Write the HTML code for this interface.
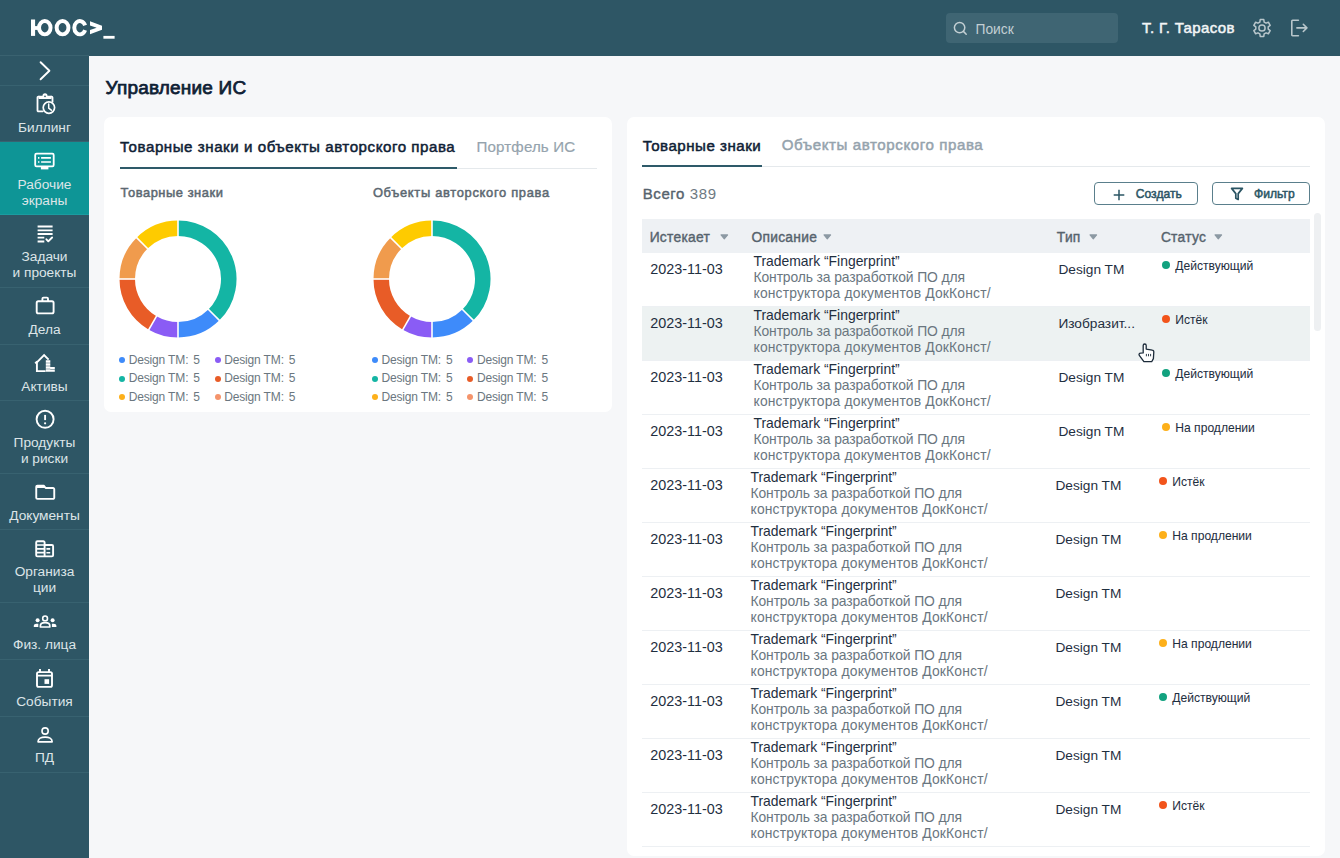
<!DOCTYPE html>
<html lang="ru">
<head>
<meta charset="utf-8">
<title>Управление ИС</title>
<style>
*{box-sizing:border-box;margin:0;padding:0}
html,body{width:1340px;height:858px;overflow:hidden;background:#F6F7F9;font-family:"Liberation Sans",sans-serif}
body{position:relative}
.a{position:absolute;white-space:nowrap}
#hdr{position:absolute;left:0;top:0;width:1340px;height:56px;background:#2E5665}
#side{position:absolute;left:0;top:56px;width:89px;height:802px;background:#2E5665}
#sline{position:absolute;left:0;top:55px;width:89px;height:1px;background:#3A6270}
.si{position:absolute;left:0;width:89px;border-bottom:1px solid #386270}
.si.act{background:#0E9596;border-bottom-color:#1A9CA0}
.si svg{position:absolute;left:32.5px;width:24px;height:24px}
.si .t{position:absolute;left:0;width:89px;text-align:center;color:#DDE5E8;font-size:13.7px;line-height:16px;white-space:nowrap}
.card{position:absolute;background:#fff;border-radius:7px}
.dot{position:absolute;width:6px;height:6px;border-radius:50%}
.leg{font-size:11.8px;line-height:20px;color:#6B7780}
.row{position:absolute;left:642px;width:668px;height:54px;border-bottom:1px solid #EDF0F3}
.row.hov{background:#EDF2F2}
.td{font-size:14px;line-height:16px;color:#1F2F3F}
.desc{font-size:13.9px;line-height:16px;color:#6E7A83}
.desc .tm{color:#1F2F3F}
.sdot{position:absolute;width:8px;height:8px;border-radius:50%}
.st{font-size:12.1px;line-height:14px;color:#1F2F3F;-webkit-text-stroke:0.15px #1F2F3F}
.th{font-size:14.4px;line-height:20px;color:#56636D;-webkit-text-stroke:0.4px #56636D}
.th svg{margin-left:7px;vertical-align:2px}
.btn{position:absolute;top:182px;height:23px;border:1px solid #5A7F8C;border-radius:4px}
.bt{font-size:12px;line-height:20px;color:#2B5564;-webkit-text-stroke:0.4px #2B5564}
</style>
</head>
<body>
<div id="hdr">
  <div class="a" style="left:946px;top:13px;width:172px;height:30px;border-radius:4px;background:#3F6573"></div>
  <svg class="a" style="left:952px;top:20px" width="16" height="16" viewBox="0 0 16 16"><circle cx="7.6" cy="7.6" r="5.2" fill="none" stroke="#C3CFD3" stroke-width="1.5"/><path d="M11.4 11.4L14.2 14.2" stroke="#C3CFD3" stroke-width="1.5" stroke-linecap="round"/></svg>
  <svg class="a" style="left:1252px;top:18px" width="20" height="20" viewBox="-10 -10 20 20"><path d="M-2.15 -5.92 L-1.79 -8.41 L1.79 -8.41 L2.15 -5.92 L4.05 -4.83 L6.39 -5.75 L8.18 -2.66 L6.20 -1.09 L6.20 1.09 L8.18 2.66 L6.39 5.75 L4.05 4.83 L2.15 5.92 L1.79 8.41 L-1.79 8.41 L-2.15 5.92 L-4.05 4.83 L-6.39 5.75 L-8.18 2.66 L-6.20 1.09 L-6.20 -1.09 L-8.18 -2.66 L-6.39 -5.75 L-4.05 -4.83Z" fill="none" stroke="#B8C6CB" stroke-width="1.5" stroke-linejoin="round"/><circle cx="0" cy="0" r="3.1" fill="none" stroke="#B8C6CB" stroke-width="1.5"/></svg>
  <svg class="a" style="left:1288px;top:17px" width="22" height="22" viewBox="0 0 22 22"><path d="M10.4 3.3H4.6a0.8 0.8 0 0 0-0.8 0.8v13.8a0.8 0.8 0 0 0 0.8 0.8h5.8" fill="none" stroke="#B8C6CB" stroke-width="1.6" stroke-linecap="round"/><path d="M8.9 10.9h9.8M15.3 7.3l3.6 3.6l-3.6 3.6" fill="none" stroke="#B8C6CB" stroke-width="1.6" stroke-linecap="round" stroke-linejoin="round"/></svg>
</div>
<div id="sline"></div>
<div id="side">
<div class="si" style="top:0;height:30px"><svg style="position:absolute;left:0;top:0;width:89px;height:30px" viewBox="0 0 89 30"><path d="M40.6 6.2L49.4 14.75L40.6 23.3" fill="none" stroke="#fff" stroke-width="1.9" stroke-linecap="round" stroke-linejoin="round"/></svg></div>
<div class="si" style="top:30px;height:56px"><svg style="top:6.30px" viewBox="0 0 24 24"><path d="M9.8 19.3H5.4a0.9 0.9 0 0 1-0.9-0.9V5.5a0.9 0.9 0 0 1 0.9-0.9h0.6M18 4.6h0.6a0.9 0.9 0 0 1 0.9 0.9v4.3" fill="none" stroke="#FFFFFF" stroke-width="1.8" stroke-linecap="round"/><path d="M5.6 3.7h3.9a2.5 2.5 0 0 1 5 0h4v3.4H5.6z" fill="#FFFFFF"/><circle cx="12" cy="4.3" r="0.85" fill="#2E5665"/><circle cx="15.9" cy="15.6" r="5.7" fill="none" stroke="#FFFFFF" stroke-width="1.7"/><path d="M15.7 12.1v4.1l2.6 2" fill="none" stroke="#FFFFFF" stroke-width="1.5" stroke-linecap="round" stroke-linejoin="round"/></svg><div class="t" style="top:34.00px">Биллинг</div></div>
<div class="si act" style="top:86px;height:73px"><svg style="top:6.80px" viewBox="0 0 24 24"><g transform="translate(-0.6,0)"><rect x="2.8" y="4.7" width="18.5" height="12.6" rx="1.3" fill="none" stroke="#FFFFFF" stroke-width="1.8"/><rect x="8.5" y="18" width="7.5" height="2.4" fill="#FFFFFF"/><path d="M5.6 8.9h1.4M8.7 8.9h9.8M5.6 13h1.4M8.7 13h9.8" stroke="#FFFFFF" stroke-width="1.6"/></g></svg><div class="t" style="top:34.50px">Рабочие</div><div class="t" style="top:50.50px">экраны</div></div>
<div class="si" style="top:159px;height:73px"><svg style="top:6.55px" viewBox="0 0 24 24"><path d="M4.6 4.45h15M4.6 8.35h15M4.6 12.05h15M4.6 15.65h6.7M4.6 19.45h6.7" stroke="#FFFFFF" stroke-width="1.9"/><path d="M13.4 17.3l1.9 2l3.8-3.8" fill="none" stroke="#FFFFFF" stroke-width="1.9" stroke-linecap="round" stroke-linejoin="round"/></svg><div class="t" style="top:34.25px">Задачи</div><div class="t" style="top:50.25px">и проекты</div></div>
<div class="si" style="top:232px;height:57px"><svg style="top:6.30px" viewBox="0 0 24 24"><rect x="3.7" y="7.2" width="16.9" height="12.2" rx="1.6" fill="none" stroke="#FFFFFF" stroke-width="1.9"/><path d="M9.4 7.2V4.7a1.1 1.1 0 0 1 1.1-1.1h3.4a1.1 1.1 0 0 1 1.1 1.1v2.5" fill="none" stroke="#FFFFFF" stroke-width="1.9"/></svg><div class="t" style="top:34.00px">Дела</div></div>
<div class="si" style="top:289px;height:56px"><svg style="top:5.80px" viewBox="0 0 24 24"><path d="M12.6 20.1H3.9V11.3L11.1 4.1l4.5 4.5" fill="none" stroke="#FFFFFF" stroke-width="1.9" stroke-linejoin="miter"/><path d="M2.2 12.3l1.9-1.9" stroke="#FFFFFF" stroke-width="1.9"/><path d="M12.8 9.2h4.5v2.5h-4.5zM12.8 12.3h4.5v2.4h-4.5zM12.8 15.3h4.5v2.4h-4.5zM12.8 18.3h4.5v2.5h-4.5zM17.3 15.9h4.5v2.2h-4.5zM17.3 18.6h4.5v2.2h-4.5z" fill="#FFFFFF"/></svg><div class="t" style="top:33.50px">Активы</div></div>
<div class="si" style="top:345px;height:73px"><svg style="top:6.30px" viewBox="0 0 24 24"><circle cx="12.1" cy="12.3" r="8.5" fill="none" stroke="#FFFFFF" stroke-width="1.9"/><path d="M12.1 7.9v5.2" stroke="#FFFFFF" stroke-width="1.9"/><circle cx="12.1" cy="16.3" r="1.1" fill="#FFFFFF"/></svg><div class="t" style="top:34.00px">Продукты</div><div class="t" style="top:50.00px">и риски</div></div>
<div class="si" style="top:418px;height:56px"><svg style="top:6.05px" viewBox="0 0 24 24"><g transform="translate(-0.4,0)"><path d="M3.65 6.8a1.2 1.2 0 0 1 1.2-1.2h6.3l1.9 2.4h7.4a1.2 1.2 0 0 1 1.2 1.2v8.5a1.2 1.2 0 0 1-1.2 1.2H4.85a1.2 1.2 0 0 1-1.2-1.2z" fill="none" stroke="#FFFFFF" stroke-width="1.9" stroke-linejoin="round"/><path d="M3.65 5.6h7.5l1.9 2.4H3.65z" fill="#FFFFFF"/></g></svg><div class="t" style="top:33.75px">Документы</div></div>
<div class="si" style="top:474px;height:73px"><svg style="top:6.55px" viewBox="0 0 24 24"><g transform="translate(-0.5,-0.6)"><path d="M12.1 20H4.9a1.2 1.2 0 0 1-1.2-1.2V6.1a1.2 1.2 0 0 1 1.2-1.2h6a1.2 1.2 0 0 1 1.2 1.2V20h7.3a1.2 1.2 0 0 0 1.2-1.2V9.8a1.2 1.2 0 0 0-1.2-1.2h-7.3" fill="none" stroke="#FFFFFF" stroke-width="1.9"/><path d="M3.7 8.6h8.4M3.7 12.5h8.4M3.7 16.3h8.4M13.9 12.45h3.8M13.9 16.35h3.8" stroke="#FFFFFF" stroke-width="1.7"/></g></svg><div class="t" style="top:34.25px">Организа</div><div class="t" style="top:50.25px">ции</div></div>
<div class="si" style="top:547px;height:57px"><svg style="top:6.30px" viewBox="0 0 24 24"><circle cx="12.1" cy="9.4" r="2.4" fill="none" stroke="#FFFFFF" stroke-width="1.6"/><path d="M7.4 18v-1.2c0-1.8 2.1-3.1 4.7-3.1s4.7 1.3 4.7 3.1V18z" fill="none" stroke="#FFFFFF" stroke-width="1.7" stroke-linejoin="round"/><circle cx="4.6" cy="11.3" r="2" fill="#FFFFFF"/><circle cx="19.6" cy="11.3" r="2" fill="#FFFFFF"/><path d="M0.8 18v-1.3c0-1.2 1.2-2 2.6-2h1.9v3.3zM23.4 18v-1.3c0-1.2-1.2-2-2.6-2h-1.9v3.3z" fill="#FFFFFF"/></svg><div class="t" style="top:34.00px">Физ. лица</div></div>
<div class="si" style="top:604px;height:57px"><svg style="top:5.80px" viewBox="0 0 24 24"><g transform="translate(-0.6,-0.2)"><rect x="4.6" y="6.3" width="15" height="14.8" rx="1.6" fill="none" stroke="#FFFFFF" stroke-width="1.9"/><path d="M4.6 9.8h15M7.6 3.3v3M16.6 3.3v3" stroke="#FFFFFF" stroke-width="1.9"/><rect x="12.1" y="13.4" width="4.6" height="4.7" fill="#FFFFFF"/></g></svg><div class="t" style="top:33.50px">События</div></div>
<div class="si" style="top:661px;height:56px"><svg style="top:5.30px" viewBox="0 0 24 24"><circle cx="12.1" cy="9" r="3.1" fill="none" stroke="#FFFFFF" stroke-width="1.6"/><path d="M5.1 19.8v-0.4c0-2.6 3.1-4.3 7-4.3s7 1.7 7 4.3v0.4z" fill="none" stroke="#FFFFFF" stroke-width="1.7" stroke-linejoin="round"/></svg><div class="t" style="top:33.00px">ПД</div></div>
</div>

<div class="card" style="left:104px;top:117px;width:508px;height:295px"></div>
<div class="a" style="left:457px;top:167.5px;width:140px;height:1.5px;background:#E5E9EC"></div>
<div class="a" style="left:120px;top:167px;width:337px;height:2px;background:#2E5A69"></div>
<div class="a" style="left:118.3px;top:218.5px"><svg width="120" height="120" viewBox="0 0 120 120"><path d="M60.00 1.50A58.5 58.5 0 0 1 101.37 101.37L90.41 90.41A43 43 0 0 0 60.00 17.00Z" fill="#14B5A4"/><path d="M101.37 101.37A58.5 58.5 0 0 1 60.00 118.50L60.00 103.00A43 43 0 0 0 90.41 90.41Z" fill="#3E8BFA"/><path d="M60.00 118.50A58.5 58.5 0 0 1 30.75 110.66L38.50 97.24A43 43 0 0 0 60.00 103.00Z" fill="#8A5CF5"/><path d="M30.75 110.66A58.5 58.5 0 0 1 1.50 60.00L17.00 60.00A43 43 0 0 0 38.50 97.24Z" fill="#E85C27"/><path d="M1.50 60.00A58.5 58.5 0 0 1 18.63 18.63L29.59 29.59A43 43 0 0 0 17.00 60.00Z" fill="#F09B4D"/><path d="M18.63 18.63A58.5 58.5 0 0 1 60.00 1.50L60.00 17.00A43 43 0 0 0 29.59 29.59Z" fill="#FECB00"/><line x1="60.00" y1="20.00" x2="60.00" y2="-1.00" stroke="#fff" stroke-width="1.6"/><line x1="88.28" y1="88.28" x2="103.13" y2="103.13" stroke="#fff" stroke-width="1.6"/><line x1="60.00" y1="100.00" x2="60.00" y2="121.00" stroke="#fff" stroke-width="1.6"/><line x1="40.00" y1="94.64" x2="29.50" y2="112.83" stroke="#fff" stroke-width="1.6"/><line x1="20.00" y1="60.00" x2="-1.00" y2="60.00" stroke="#fff" stroke-width="1.6"/><line x1="31.72" y1="31.72" x2="16.87" y2="16.87" stroke="#fff" stroke-width="1.6"/></svg></div>
<div class="a" style="left:371.5px;top:218.5px"><svg width="120" height="120" viewBox="0 0 120 120"><path d="M60.00 1.50A58.5 58.5 0 0 1 101.37 101.37L90.41 90.41A43 43 0 0 0 60.00 17.00Z" fill="#14B5A4"/><path d="M101.37 101.37A58.5 58.5 0 0 1 60.00 118.50L60.00 103.00A43 43 0 0 0 90.41 90.41Z" fill="#3E8BFA"/><path d="M60.00 118.50A58.5 58.5 0 0 1 30.75 110.66L38.50 97.24A43 43 0 0 0 60.00 103.00Z" fill="#8A5CF5"/><path d="M30.75 110.66A58.5 58.5 0 0 1 1.50 60.00L17.00 60.00A43 43 0 0 0 38.50 97.24Z" fill="#E85C27"/><path d="M1.50 60.00A58.5 58.5 0 0 1 18.63 18.63L29.59 29.59A43 43 0 0 0 17.00 60.00Z" fill="#F09B4D"/><path d="M18.63 18.63A58.5 58.5 0 0 1 60.00 1.50L60.00 17.00A43 43 0 0 0 29.59 29.59Z" fill="#FECB00"/><line x1="60.00" y1="20.00" x2="60.00" y2="-1.00" stroke="#fff" stroke-width="1.6"/><line x1="88.28" y1="88.28" x2="103.13" y2="103.13" stroke="#fff" stroke-width="1.6"/><line x1="60.00" y1="100.00" x2="60.00" y2="121.00" stroke="#fff" stroke-width="1.6"/><line x1="40.00" y1="94.64" x2="29.50" y2="112.83" stroke="#fff" stroke-width="1.6"/><line x1="20.00" y1="60.00" x2="-1.00" y2="60.00" stroke="#fff" stroke-width="1.6"/><line x1="31.72" y1="31.72" x2="16.87" y2="16.87" stroke="#fff" stroke-width="1.6"/></svg></div>
<div class="dot" style="left:119.0px;top:357.0px;background:#3E8BFA"></div><div class="a" style="left:128.7px;top:350px;font-size:12px;line-height:20px;color:#6B7780;letter-spacing:-0.15px;">Design TM:&nbsp;<span style="margin-left:1.8px">5</span></div><div class="dot" style="left:214.5px;top:357.0px;background:#8A5CF5"></div><div class="a" style="left:224.2px;top:350px;font-size:12px;line-height:20px;color:#6B7780;letter-spacing:-0.15px;">Design TM:&nbsp;<span style="margin-left:1.8px">5</span></div><div class="dot" style="left:119.0px;top:375.6px;background:#14B5A4"></div><div class="a" style="left:128.7px;top:368px;font-size:12px;line-height:20px;color:#6B7780;letter-spacing:-0.15px;">Design TM:&nbsp;<span style="margin-left:1.8px">5</span></div><div class="dot" style="left:214.5px;top:375.6px;background:#E85C27"></div><div class="a" style="left:224.2px;top:368px;font-size:12px;line-height:20px;color:#6B7780;letter-spacing:-0.15px;">Design TM:&nbsp;<span style="margin-left:1.8px">5</span></div><div class="dot" style="left:119.0px;top:394.3px;background:#FDB01A"></div><div class="a" style="left:128.7px;top:387px;font-size:12px;line-height:20px;color:#6B7780;letter-spacing:-0.15px;">Design TM:&nbsp;<span style="margin-left:1.8px">5</span></div><div class="dot" style="left:214.5px;top:394.3px;background:#F5946B"></div><div class="a" style="left:224.2px;top:387px;font-size:12px;line-height:20px;color:#6B7780;letter-spacing:-0.15px;">Design TM:&nbsp;<span style="margin-left:1.8px">5</span></div>
<div class="dot" style="left:371.7px;top:357.0px;background:#3E8BFA"></div><div class="a" style="left:381.4px;top:350px;font-size:12px;line-height:20px;color:#6B7780;letter-spacing:-0.15px;">Design TM:&nbsp;<span style="margin-left:1.8px">5</span></div><div class="dot" style="left:467.2px;top:357.0px;background:#8A5CF5"></div><div class="a" style="left:476.9px;top:350px;font-size:12px;line-height:20px;color:#6B7780;letter-spacing:-0.15px;">Design TM:&nbsp;<span style="margin-left:1.8px">5</span></div><div class="dot" style="left:371.7px;top:375.6px;background:#14B5A4"></div><div class="a" style="left:381.4px;top:368px;font-size:12px;line-height:20px;color:#6B7780;letter-spacing:-0.15px;">Design TM:&nbsp;<span style="margin-left:1.8px">5</span></div><div class="dot" style="left:467.2px;top:375.6px;background:#E85C27"></div><div class="a" style="left:476.9px;top:368px;font-size:12px;line-height:20px;color:#6B7780;letter-spacing:-0.15px;">Design TM:&nbsp;<span style="margin-left:1.8px">5</span></div><div class="dot" style="left:371.7px;top:394.3px;background:#FDB01A"></div><div class="a" style="left:381.4px;top:387px;font-size:12px;line-height:20px;color:#6B7780;letter-spacing:-0.15px;">Design TM:&nbsp;<span style="margin-left:1.8px">5</span></div><div class="dot" style="left:467.2px;top:394.3px;background:#F5946B"></div><div class="a" style="left:476.9px;top:387px;font-size:12px;line-height:20px;color:#6B7780;letter-spacing:-0.15px;">Design TM:&nbsp;<span style="margin-left:1.8px">5</span></div>

<div class="card" style="left:627px;top:117px;width:698px;height:739px"></div>
<div class="a" style="left:762px;top:165.5px;width:548px;height:1.5px;background:#E5E9EC"></div>
<div class="a" style="left:642px;top:165px;width:120px;height:2px;background:#2E5A69"></div>

<div class="btn" style="left:1094px;width:104px"><svg class="a" style="left:18px;top:6px" width="12" height="12" viewBox="0 0 12 12"><path d="M6 0.7v10.6M0.7 6h10.6" stroke="#2B5564" stroke-width="1.5"/></svg></div>
<div class="btn" style="left:1212px;width:98px"><svg class="a" style="left:17px;top:4px" width="14" height="14" viewBox="0 0 14 14"><path d="M1.6 1.4h10.8L8.2 6.6V12.4L5.8 11.2V6.6z" fill="none" stroke="#2B5564" stroke-width="1.7" stroke-linejoin="round"/></svg></div>
<div class="a" style="left:1135.8px;top:184px;font-size:12.1px;line-height:20px;color:#2B5564;-webkit-text-stroke:0.5px #2B5564;">Создать</div>
<div class="a" style="left:1254px;top:184px;font-size:12.1px;line-height:20px;color:#2B5564;-webkit-text-stroke:0.5px #2B5564;">Фильтр</div>

<div class="a" style="left:642px;top:219px;width:668px;height:34px;background:#EEF1F4"></div>
<div class="a" style="left:1314px;top:213px;width:7px;height:118px;border-radius:4px;background:#EEF0F2"></div>
<div class="a" style="left:649.7px;top:228px;font-size:13.8px;line-height:20px;color:#56636D;-webkit-text-stroke:0.4px #56636D;letter-spacing:0.26px;">Истекает</div>
<svg class="a" style="left:720px;top:233.6px" width="9" height="6" viewBox="0 0 9 6"><path d="M1 0.9h6.6L4.3 4.9z" fill="#8C99A3" stroke="#8C99A3" stroke-width="1.1" stroke-linejoin="round"/></svg>
<div class="a" style="left:751.5px;top:228px;font-size:13.8px;line-height:20px;color:#56636D;-webkit-text-stroke:0.4px #56636D;letter-spacing:0.26px;">Описание</div>
<svg class="a" style="left:822.5px;top:233.6px" width="9" height="6" viewBox="0 0 9 6"><path d="M1 0.9h6.6L4.3 4.9z" fill="#8C99A3" stroke="#8C99A3" stroke-width="1.1" stroke-linejoin="round"/></svg>
<div class="a" style="left:1056.8px;top:228px;font-size:13.8px;line-height:20px;color:#56636D;-webkit-text-stroke:0.4px #56636D;letter-spacing:0.26px;">Тип</div>
<svg class="a" style="left:1088.5px;top:233.6px" width="9" height="6" viewBox="0 0 9 6"><path d="M1 0.9h6.6L4.3 4.9z" fill="#8C99A3" stroke="#8C99A3" stroke-width="1.1" stroke-linejoin="round"/></svg>
<div class="a" style="left:1160.9px;top:228px;font-size:13.8px;line-height:20px;color:#56636D;-webkit-text-stroke:0.4px #56636D;letter-spacing:0.26px;">Статус</div>
<svg class="a" style="left:1214.1px;top:233.6px" width="9" height="6" viewBox="0 0 9 6"><path d="M1 0.9h6.6L4.3 4.9z" fill="#8C99A3" stroke="#8C99A3" stroke-width="1.1" stroke-linejoin="round"/></svg>

<div class="row" style="top:253px"></div><div class="a" style="left:650.2px;top:259px;font-size:14.4px;line-height:20px;color:#1F2F3F;">2023-11-03</div><div class="a" style="left:753.5px;top:251px;font-size:13.9px;line-height:20px;color:#1F2F3F;">Trademark “Fingerprint”</div><div class="a" style="left:753.5px;top:267px;font-size:13.9px;line-height:20px;color:#6A767F;letter-spacing:-0.12px;">Контроль за разработкой ПО для</div><div class="a" style="left:753.5px;top:283px;font-size:13.9px;line-height:20px;color:#6A767F;letter-spacing:0.16px;">конструктора документов ДокКонст/</div><div class="a" style="left:1058.4px;top:260px;font-size:13.7px;line-height:20px;color:#1F2F3F;">Design TM</div><div class="sdot" style="left:1162px;top:261.2px;background:#12A27F"></div><div class="a" style="left:1175.3px;top:256px;font-size:12.1px;line-height:20px;color:#1F2F3F;-webkit-text-stroke:0.05px #1F2F3F;">Действующий</div>
<div class="row hov" style="top:307px"></div><div class="a" style="left:650.2px;top:313px;font-size:14.4px;line-height:20px;color:#1F2F3F;">2023-11-03</div><div class="a" style="left:753.5px;top:305px;font-size:13.9px;line-height:20px;color:#1F2F3F;">Trademark “Fingerprint”</div><div class="a" style="left:753.5px;top:321px;font-size:13.9px;line-height:20px;color:#6A767F;letter-spacing:-0.12px;">Контроль за разработкой ПО для</div><div class="a" style="left:753.5px;top:337px;font-size:13.9px;line-height:20px;color:#6A767F;letter-spacing:0.16px;">конструктора документов ДокКонст/</div><div class="a" style="left:1058.4px;top:314px;font-size:13.7px;line-height:20px;color:#1F2F3F;">Изобразит...</div><div class="sdot" style="left:1162px;top:315.2px;background:#F2541B"></div><div class="a" style="left:1175.3px;top:310px;font-size:12.1px;line-height:20px;color:#1F2F3F;-webkit-text-stroke:0.05px #1F2F3F;">Истёк</div>
<div class="row" style="top:361px"></div><div class="a" style="left:650.2px;top:367px;font-size:14.4px;line-height:20px;color:#1F2F3F;">2023-11-03</div><div class="a" style="left:753.5px;top:359px;font-size:13.9px;line-height:20px;color:#1F2F3F;">Trademark “Fingerprint”</div><div class="a" style="left:753.5px;top:375px;font-size:13.9px;line-height:20px;color:#6A767F;letter-spacing:-0.12px;">Контроль за разработкой ПО для</div><div class="a" style="left:753.5px;top:391px;font-size:13.9px;line-height:20px;color:#6A767F;letter-spacing:0.16px;">конструктора документов ДокКонст/</div><div class="a" style="left:1058.4px;top:368px;font-size:13.7px;line-height:20px;color:#1F2F3F;">Design TM</div><div class="sdot" style="left:1162px;top:369.2px;background:#12A27F"></div><div class="a" style="left:1175.3px;top:364px;font-size:12.1px;line-height:20px;color:#1F2F3F;-webkit-text-stroke:0.05px #1F2F3F;">Действующий</div>
<div class="row" style="top:415px"></div><div class="a" style="left:650.2px;top:421px;font-size:14.4px;line-height:20px;color:#1F2F3F;">2023-11-03</div><div class="a" style="left:753.5px;top:413px;font-size:13.9px;line-height:20px;color:#1F2F3F;">Trademark “Fingerprint”</div><div class="a" style="left:753.5px;top:429px;font-size:13.9px;line-height:20px;color:#6A767F;letter-spacing:-0.12px;">Контроль за разработкой ПО для</div><div class="a" style="left:753.5px;top:445px;font-size:13.9px;line-height:20px;color:#6A767F;letter-spacing:0.16px;">конструктора документов ДокКонст/</div><div class="a" style="left:1058.4px;top:422px;font-size:13.7px;line-height:20px;color:#1F2F3F;">Design TM</div><div class="sdot" style="left:1162px;top:423.2px;background:#FDB01A"></div><div class="a" style="left:1175.3px;top:418px;font-size:12.1px;line-height:20px;color:#1F2F3F;-webkit-text-stroke:0.05px #1F2F3F;">На продлении</div>
<div class="row" style="top:469px"></div><div class="a" style="left:650.2px;top:475px;font-size:14.4px;line-height:20px;color:#1F2F3F;">2023-11-03</div><div class="a" style="left:750.5px;top:467px;font-size:13.9px;line-height:20px;color:#1F2F3F;">Trademark “Fingerprint”</div><div class="a" style="left:750.5px;top:483px;font-size:13.9px;line-height:20px;color:#6A767F;letter-spacing:-0.12px;">Контроль за разработкой ПО для</div><div class="a" style="left:750.5px;top:499px;font-size:13.9px;line-height:20px;color:#6A767F;letter-spacing:0.16px;">конструктора документов ДокКонст/</div><div class="a" style="left:1055.4px;top:476px;font-size:13.7px;line-height:20px;color:#1F2F3F;">Design TM</div><div class="sdot" style="left:1159px;top:477.2px;background:#F2541B"></div><div class="a" style="left:1172.3px;top:472px;font-size:12.1px;line-height:20px;color:#1F2F3F;-webkit-text-stroke:0.05px #1F2F3F;">Истёк</div>
<div class="row" style="top:523px"></div><div class="a" style="left:650.2px;top:529px;font-size:14.4px;line-height:20px;color:#1F2F3F;">2023-11-03</div><div class="a" style="left:750.5px;top:521px;font-size:13.9px;line-height:20px;color:#1F2F3F;">Trademark “Fingerprint”</div><div class="a" style="left:750.5px;top:537px;font-size:13.9px;line-height:20px;color:#6A767F;letter-spacing:-0.12px;">Контроль за разработкой ПО для</div><div class="a" style="left:750.5px;top:553px;font-size:13.9px;line-height:20px;color:#6A767F;letter-spacing:0.16px;">конструктора документов ДокКонст/</div><div class="a" style="left:1055.4px;top:530px;font-size:13.7px;line-height:20px;color:#1F2F3F;">Design TM</div><div class="sdot" style="left:1159px;top:531.2px;background:#FDB01A"></div><div class="a" style="left:1172.3px;top:526px;font-size:12.1px;line-height:20px;color:#1F2F3F;-webkit-text-stroke:0.05px #1F2F3F;">На продлении</div>
<div class="row" style="top:577px"></div><div class="a" style="left:650.2px;top:583px;font-size:14.4px;line-height:20px;color:#1F2F3F;">2023-11-03</div><div class="a" style="left:750.5px;top:575px;font-size:13.9px;line-height:20px;color:#1F2F3F;">Trademark “Fingerprint”</div><div class="a" style="left:750.5px;top:591px;font-size:13.9px;line-height:20px;color:#6A767F;letter-spacing:-0.12px;">Контроль за разработкой ПО для</div><div class="a" style="left:750.5px;top:607px;font-size:13.9px;line-height:20px;color:#6A767F;letter-spacing:0.16px;">конструктора документов ДокКонст/</div><div class="a" style="left:1055.4px;top:584px;font-size:13.7px;line-height:20px;color:#1F2F3F;">Design TM</div>
<div class="row" style="top:631px"></div><div class="a" style="left:650.2px;top:637px;font-size:14.4px;line-height:20px;color:#1F2F3F;">2023-11-03</div><div class="a" style="left:750.5px;top:629px;font-size:13.9px;line-height:20px;color:#1F2F3F;">Trademark “Fingerprint”</div><div class="a" style="left:750.5px;top:645px;font-size:13.9px;line-height:20px;color:#6A767F;letter-spacing:-0.12px;">Контроль за разработкой ПО для</div><div class="a" style="left:750.5px;top:661px;font-size:13.9px;line-height:20px;color:#6A767F;letter-spacing:0.16px;">конструктора документов ДокКонст/</div><div class="a" style="left:1055.4px;top:638px;font-size:13.7px;line-height:20px;color:#1F2F3F;">Design TM</div><div class="sdot" style="left:1159px;top:639.2px;background:#FDB01A"></div><div class="a" style="left:1172.3px;top:634px;font-size:12.1px;line-height:20px;color:#1F2F3F;-webkit-text-stroke:0.05px #1F2F3F;">На продлении</div>
<div class="row" style="top:685px"></div><div class="a" style="left:650.2px;top:691px;font-size:14.4px;line-height:20px;color:#1F2F3F;">2023-11-03</div><div class="a" style="left:750.5px;top:683px;font-size:13.9px;line-height:20px;color:#1F2F3F;">Trademark “Fingerprint”</div><div class="a" style="left:750.5px;top:699px;font-size:13.9px;line-height:20px;color:#6A767F;letter-spacing:-0.12px;">Контроль за разработкой ПО для</div><div class="a" style="left:750.5px;top:715px;font-size:13.9px;line-height:20px;color:#6A767F;letter-spacing:0.16px;">конструктора документов ДокКонст/</div><div class="a" style="left:1055.4px;top:692px;font-size:13.7px;line-height:20px;color:#1F2F3F;">Design TM</div><div class="sdot" style="left:1159px;top:693.2px;background:#12A27F"></div><div class="a" style="left:1172.3px;top:688px;font-size:12.1px;line-height:20px;color:#1F2F3F;-webkit-text-stroke:0.05px #1F2F3F;">Действующий</div>
<div class="row" style="top:739px"></div><div class="a" style="left:650.2px;top:745px;font-size:14.4px;line-height:20px;color:#1F2F3F;">2023-11-03</div><div class="a" style="left:750.5px;top:737px;font-size:13.9px;line-height:20px;color:#1F2F3F;">Trademark “Fingerprint”</div><div class="a" style="left:750.5px;top:753px;font-size:13.9px;line-height:20px;color:#6A767F;letter-spacing:-0.12px;">Контроль за разработкой ПО для</div><div class="a" style="left:750.5px;top:769px;font-size:13.9px;line-height:20px;color:#6A767F;letter-spacing:0.16px;">конструктора документов ДокКонст/</div><div class="a" style="left:1055.4px;top:746px;font-size:13.7px;line-height:20px;color:#1F2F3F;">Design TM</div>
<div class="row" style="top:793px"></div><div class="a" style="left:650.2px;top:799px;font-size:14.4px;line-height:20px;color:#1F2F3F;">2023-11-03</div><div class="a" style="left:750.5px;top:791px;font-size:13.9px;line-height:20px;color:#1F2F3F;">Trademark “Fingerprint”</div><div class="a" style="left:750.5px;top:807px;font-size:13.9px;line-height:20px;color:#6A767F;letter-spacing:-0.12px;">Контроль за разработкой ПО для</div><div class="a" style="left:750.5px;top:823px;font-size:13.9px;line-height:20px;color:#6A767F;letter-spacing:0.16px;">конструктора документов ДокКонст/</div><div class="a" style="left:1055.4px;top:800px;font-size:13.7px;line-height:20px;color:#1F2F3F;">Design TM</div><div class="sdot" style="left:1159px;top:801.2px;background:#F2541B"></div><div class="a" style="left:1172.3px;top:796px;font-size:12.1px;line-height:20px;color:#1F2F3F;-webkit-text-stroke:0.05px #1F2F3F;">Истёк</div>
<svg class="a" style="left:0;top:0" width="130" height="56" viewBox="0 0 130 56"><g fill="#fff"><rect x="31" y="19.5" width="4.1" height="16.4"/><rect x="34.5" y="26.1" width="4" height="3.8"/></g><g fill="none" stroke="#fff" stroke-width="3.95"><ellipse cx="44.8" cy="27.7" rx="5.75" ry="6.65"/><ellipse cx="62.55" cy="27.7" rx="5.9" ry="6.65"/><path d="M85.1 25.3A5.6 6.65 0 1 0 85.1 30.1"/></g><path d="M90 21.2L102 25.8V29.7L90 34.2V29.9L96.7 27.75L90 25.6Z" fill="#fff"/><rect x="103.4" y="35.9" width="11.2" height="2.8" fill="#fff"/></svg>
<div class="a" style="left:975.5px;top:20px;font-size:13.8px;line-height:20px;color:#C3CFD3;">Поиск</div>
<div class="a" style="left:1142px;top:18px;font-size:15px;line-height:20px;color:#F2F5F6;-webkit-text-stroke:0.5px #F2F5F6;letter-spacing:0.38px;">Т. Г. Тарасов</div>
<div class="a" style="left:105.5px;top:78px;font-size:19px;line-height:20px;color:#0F2135;-webkit-text-stroke:0.75px #0F2135;letter-spacing:0.2px;">Управление ИС</div>
<div class="a" style="left:120px;top:137px;font-size:15.1px;line-height:20px;color:#0F2135;-webkit-text-stroke:0.5px #0F2135;letter-spacing:0.55px;">Товарные знаки и объекты авторского права</div>
<div class="a" style="left:476.6px;top:137px;font-size:15.1px;line-height:20px;color:#95A3AD;-webkit-text-stroke:0.2px #95A3AD;letter-spacing:0.13px;">Портфель ИС</div>
<div class="a" style="left:120.6px;top:183px;font-size:12.9px;line-height:20px;color:#5C6871;-webkit-text-stroke:0.5px #5C6871;letter-spacing:0.54px;">Товарные знаки</div>
<div class="a" style="left:372.9px;top:183px;font-size:12.9px;line-height:20px;color:#5C6871;-webkit-text-stroke:0.5px #5C6871;letter-spacing:0.69px;">Объекты авторского права</div>
<div class="a" style="left:642.7px;top:136px;font-size:15.1px;line-height:20px;color:#0F2135;-webkit-text-stroke:0.5px #0F2135;letter-spacing:0.5px;">Товарные знаки</div>
<div class="a" style="left:781.7px;top:135px;font-size:15.1px;line-height:20px;color:#95A3AD;-webkit-text-stroke:0.5px #95A3AD;letter-spacing:0.58px;">Объекты авторского права</div>
<div class="a" style="left:642.7px;top:184px;font-size:15px;line-height:20px;color:#6E7A83;letter-spacing:0.6px;"><span style="-webkit-text-stroke:0.4px #56636D;color:#56636D">Всего</span> 389</div>

<svg class="a" style="left:1137px;top:342px" width="20" height="22" viewBox="0 0 20 22"><path d="M6.2 10.2V3.5A1.5 1.5 0 0 1 9.2 3.5V7.1L15.3 8.2A1.6 1.6 0 0 1 16.8 9.9L16.4 16.6L14.7 19.7H6.9L2.3 13.3A1.3 1.3 0 0 1 3.3 11.2L6.2 10.9Z" fill="#fff" stroke="#1C2B3A" stroke-width="1.3" stroke-linejoin="round"/><path d="M9.4 11.9v2.4M11.5 11.9v2.4M13.6 11.9v2.4" stroke="#1C2B3A" stroke-width="0.9"/></svg>
</body>
</html>
